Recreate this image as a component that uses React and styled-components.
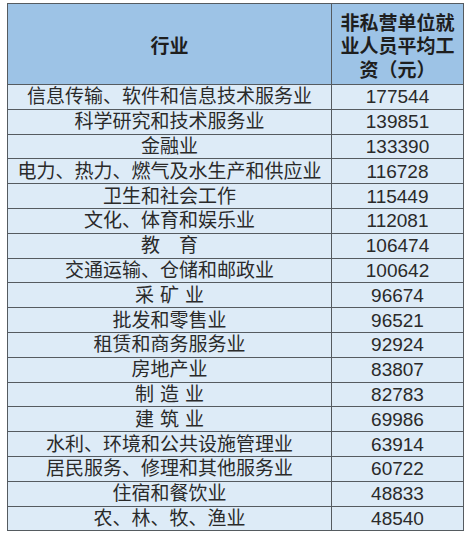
import React from 'react';
import styled, { createGlobalStyle } from 'styled-components';

const GlobalStyle = createGlobalStyle`
  html, body {
    margin: 0;
    padding: 0;
    background: #ffffff;
  }
`;

const Page = styled.div`
  padding: 3px 0 0 7px;
  font-family: 'Liberation Sans', 'Noto Sans CJK SC', sans-serif;
`;

const Table = styled.div`
  width: 457px;
  box-sizing: border-box;
  display: grid;
  grid-template-columns: 323px 131px;
  grid-template-rows: 80px repeat(18, 23.8px);
  gap: 1px;
  border: 1px solid #555b60;
  background: #555b60;
`;

const HeadCell = styled.div`
  background: #9dc3e6;
  color: #1e1e1e;
  font-weight: 700;
  font-size: 19px;
  line-height: 23.5px;
  display: flex;
  align-items: center;
  justify-content: center;
  text-align: center;
  padding-top: 6px;
  box-sizing: border-box;
`;

const Cell = styled.div`
  background: #ddebf7;
  color: #2a2a2a;
  font-size: 19px;
  line-height: 1;
  display: flex;
  align-items: center;
  justify-content: center;
  white-space: nowrap;
`;

const Gap = styled.span`
  display: inline-block;
  width: ${p => p.$w}px;
`;

const rows = [
  ['信息传输、软件和信息技术服务业', '177544'],
  ['科学研究和技术服务业', '139851'],
  ['金融业', '133390'],
  ['电力、热力、燃气及水生产和供应业', '116728'],
  ['卫生和社会工作', '115449'],
  ['文化、体育和娱乐业', '112081'],
  ['教育', '106474', 19],
  ['交通运输、仓储和邮政业', '100642'],
  ['采矿业', '96674', 6],
  ['批发和零售业', '96521'],
  ['租赁和商务服务业', '92924'],
  ['房地产业', '83807'],
  ['制造业', '82783', 6],
  ['建筑业', '69986', 6],
  ['水利、环境和公共设施管理业', '63914'],
  ['居民服务、修理和其他服务业', '60722'],
  ['住宿和餐饮业', '48833'],
  ['农、林、牧、渔业', '48540'],
];

// spaced names put a fixed gap between each character
const renderName = (name, gap) => {
  if (!gap) return name;
  return name.split('').map((ch, i) => (
    <React.Fragment key={i}>
      {i > 0 && <Gap $w={gap} />}
      {ch}
    </React.Fragment>
  ));
};

const App = () => {
  return (
    <Page>
      <GlobalStyle />
      <Table>
        <HeadCell>行业</HeadCell>
        <HeadCell>
          非私营单位就<br />业人员平均工<br />资（元）
        </HeadCell>
        {rows.map(([name, value, gap]) => (
          <React.Fragment key={name}>
            <Cell>{renderName(name, gap)}</Cell>
            <Cell>{value}</Cell>
          </React.Fragment>
        ))}
      </Table>
    </Page>
  );
};

export default App;
